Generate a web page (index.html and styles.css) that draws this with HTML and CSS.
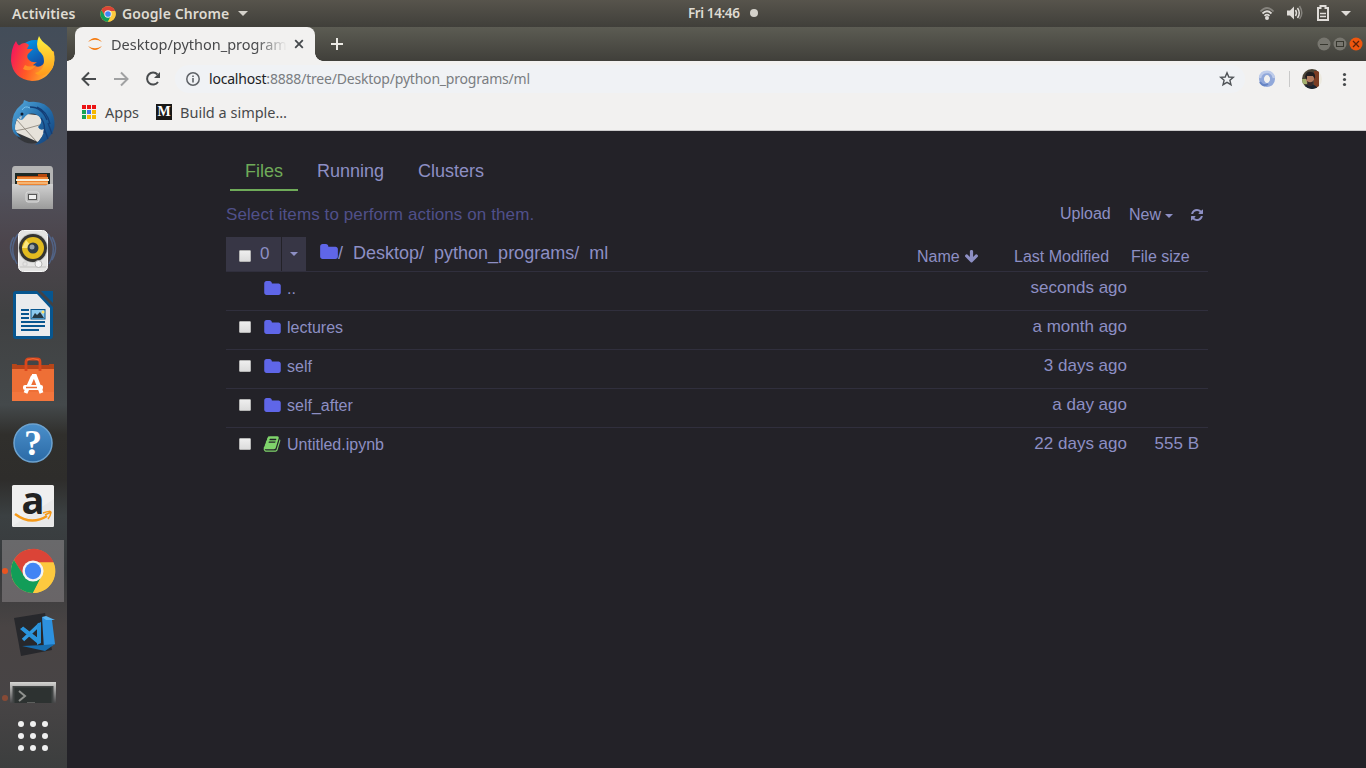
FILE: index.html
```html
<!DOCTYPE html>
<html lang="en">
<head>
<meta charset="utf-8">
<title>Desktop/python_programs/ml</title>
<link rel="stylesheet" href="styles.css">
</head>
<body>
<svg class="defs" width="0" height="0">
  <defs>
    <symbol id="chrome" viewBox="0 0 48 48">
      <circle cx="24" cy="24" r="23" fill="#fdc93f"/>
      <path d="M4.1 12.500A23 23 0 0 1 45.500 15H24L14 29Z" fill="#db4437"/>
      <path d="M4.100 12.500A23 23 0 0 0 24 47L33.500 29H14.500Z" fill="#129d58"/>
      <path d="M24 47A23 23 0 0 0 45.500 15H24L33 29Z" fill="#fdc93f"/>
      <circle cx="24" cy="24" r="11" fill="#f4f4f4"/><circle cx="24" cy="24" r="8.500" fill="#4285f4"/>
    </symbol>
    <symbol id="folder" viewBox="0 0 1664 1408"><path d="M1664 416v704q0 92-66 158t-158 66h-1216q-92 0-158-66t-66-158v-960q0-92 66-158t158-66h320q92 0 158 66t66 158v32h672q92 0 158 66t66 158z" transform="translate(0 64)"/></symbol>
    <symbol id="book" viewBox="0 0 1792 1792"><path d="M1703 478q40 57 18 129l-275 906q-19 64-76.500 107.500t-122.500 43.500h-923q-77 0-148.500-53.500t-99.500-131.500q-24-67-2-127 0-4 3-27t4-37q1-8-3-21.500t-3-19.500q2-11 8-21t16.500-23.500 16.500-23.500q23-38 45-91.500t30-91.500q3-10 .5-30t-.5-28q3-11 17-28t17-23q21-36 42-92t25-90q1-9-2.500-32t.5-28q4-13 22-30.500t22-22.500q19-26 42.500-84.500t27.500-96.500q1-8-3-25.500t-2-26.500q2-8 9-18t18-23 17-21q8-12 16.500-30.500t15-35 16-36 19.500-32 26.500-23.500 36-11.500 47.500 5.500l-1 3q38-9 51-9h761q74 0 114 56t18 130l-274 906q-36 119-71.500 153.500t-128.500 34.500h-869q-27 0-38 15-11 16-1 43 24 70 144 70h923q29 0 56-15.500t35-41.500l300-987q7-22 5-57 38 15 59 43zm-1064 2q-4 13 2 22.500t20 9.500h608q13 0 25.500-9.500t16.500-22.500l21-64q4-13-2-22.500t-20-9.500h-608q-13 0-25.500 9.500t-16.500 22.500zm-83 256q-4 13 2 22.500t20 9.500h608q13 0 25.500-9.500t16.500-22.500l21-64q4-13-2-22.500t-20-9.500h-608q-13 0-25.500 9.500t-16.500 22.500z"/></symbol>
  </defs>
</svg>

<header class="topbar">
  <span class="t-act">Activities</span>
  <svg class="t-chrome" width="16" height="16"><use href="#chrome"/></svg>
  <span class="t-app">Google Chrome</span>
  <i class="tri"></i>
  <div class="clock"><span class="t-clock">Fri 14:46</span><i class="dot"></i></div>
  <svg class="tray" width="96" height="27" viewBox="1258 0 96 27">
    <g fill="none" stroke-width="1.800">
      <path d="M1260.500 11.500Q1267 4.500 1273.500 11.500" stroke="#85837d"/>
      <path d="M1262.500 13.500Q1267 9 1271.500 13.500M1264.500 15.800Q1267 13.500 1269.500 15.800" stroke="#dfdcd8"/>
    </g>
    <circle cx="1267" cy="18" r="2" fill="#dfdcd8"/>
    <path d="M1287 10.500h3l4-4v13l-4-4h-3z" fill="#dfdcd8"/>
    <path d="M1295.500 10q2 3 0 6M1297.500 8q3.500 5 0 10" fill="none" stroke="#dfdcd8" stroke-width="1.500"/>
    <path d="M1299.500 6q4.500 7 0 13" fill="none" stroke="#85837d" stroke-width="1.500"/>
    <path d="M1318 8h2.500V6h5v2h2.500v12h-10z" fill="none" stroke="#dfdcd8" stroke-width="2"/>
    <path d="M1320 13.500h6M1320 16.500h6" stroke="#dfdcd8" stroke-width="1.500"/>
    <path d="M1341 11h10l-5 5z" fill="#dfdcd8"/>
  </svg>
</header>

<div class="desk">
<nav class="dock">
  <div class="apps">
    <div class="app"><svg width="46" height="46" viewBox="0 0 46 46">
      <defs>
        <linearGradient id="fx" x1="0" y1=".3" x2="1" y2=".6"><stop offset="0" stop-color="#f5195a"/><stop offset=".45" stop-color="#ff5a26"/><stop offset="1" stop-color="#ffbd2e"/></linearGradient>
        <linearGradient id="fy" x1="0" y1="0" x2="0" y2="1"><stop offset="0" stop-color="#fff33f"/><stop offset="1" stop-color="#ff9a1c"/></linearGradient>
        <linearGradient id="fb" x1="0" y1="0" x2=".6" y2="1"><stop offset="0" stop-color="#00a4f5"/><stop offset="1" stop-color="#18388f"/></linearGradient>
      </defs>
      <circle cx="25" cy="21" r="17" fill="url(#fb)"/>
      <path d="M6 5Q7 8 9 9.500Q15 5 19 9L17 13H23L18 18Q16 21 19 24Q22 27 27 26L23 29Q31 34 36 24Q42 12 44 16Q45 25 43 31Q36 45 22 45Q3 43 1 25Q1 12 6 5Z" fill="url(#fx)"/>
      <path d="M29 0Q31 5 37 9Q45 15 44.500 24Q44 33 38 37Q31 42 25 37Q34 35 34 25Q34 19 29 15Q25 9 29 0Z" fill="url(#fy)"/>
      <path d="M15 29Q20 32 26 29Q21 37 13 33Z" fill="#ff8d28"/>
    </svg></div>
    <div class="app"><svg width="46" height="46" viewBox="0 0 46 46">
      <defs><linearGradient id="tb" x1="0" y1="0" x2="1" y2="1"><stop offset="0" stop-color="#59aee1"/><stop offset=".5" stop-color="#246fac"/><stop offset="1" stop-color="#123e78"/></linearGradient></defs>
      <path d="M2 20L8 38Q20 48 34 40L38 22L23 11Z" fill="#34363a"/>
      <path d="M9 13L34 16L35 33L28 42L3 31Z" fill="#e6e2da"/>
      <path d="M6 19L15 29L33 24M4 31L15 29L26 41" fill="none" stroke="#99938a"/>
      <path d="M2 25Q2 12 11 5Q14 3 14 0L19 2Q35 0 42 12Q48 27 40 36Q34 44 25 45Q34 37 34 29Q30 31 28 27Q35 20 27 15Q19 11 14 18Q11 22 8 18Q5 21 5 29Q7 34 11 38Q1 34 2 25Z" fill="url(#tb)"/>
      <path d="M20 7Q32 7 37 20M27 7Q37 11 40 24M34 28L38 39M38 23L42 34M31 18Q36 25 34 33" fill="none" stroke="#143e76" stroke-width="1.300"/>
      <path d="M12 10Q15 5 20 8" stroke="#78c1ec" fill="none"/><circle cx="12" cy="14" r="1.500" fill="#101e33"/><path d="M9 17l3-1-1 4z" fill="#b6c2cc"/>
    </svg></div>
    <div class="app"><svg width="46" height="46" viewBox="0 0 46 46">
      <defs><linearGradient id="fc" x1="0" y1="0" x2="0" y2="1"><stop stop-color="#d1d1d1"/><stop offset="1" stop-color="#9b9b9b"/></linearGradient></defs>
      <path d="M2 6Q2 2 5 2H40Q43 2 43 6V45H2Z" fill="#b4b4b4"/><path d="M5 9H40V21H5Z" fill="#1d2925"/>
      <path d="M7 12H28V10H37V20H7Z" fill="#b7480d"/><path d="M7 13H38V21H7Z" fill="#ee8532"/><path d="M6 15H39V17H6Z" fill="#f5edda"/><path d="M7 18H38V20H7Z" fill="#f4b473"/>
      <path d="M2 20H7Q9 20 10 22H36Q37 20 39 20H43V45H2Z" fill="url(#fc)"/>
      <rect x="16" y="28" width="13" height="10" rx="2" fill="#b5b5b5" stroke="#ddd"/><rect x="18.500" y="30.500" width="8" height="5" fill="#eee" stroke="#555"/>
    </svg></div>
    <div class="app"><svg width="50" height="46" viewBox="0 0 50 46">
      <path d="M6 9Q-1 19 6 32M10 6Q0 20 9 36M44 9Q51 20 44 32M40 6Q50 20 41 36" fill="none" stroke="#5473a5" stroke-width="1.500" opacity=".65"/>
      <rect x="10.500" y="2.500" width="29" height="41" rx="5" fill="#e4e4e3" stroke="#f7f7f7"/><path d="M12 39H38" stroke="#c1c1bf"/>
      <circle cx="25" cy="20" r="15" fill="#c7c9c8"/><circle cx="25" cy="20" r="14" fill="#343431"/><circle cx="25" cy="20" r="11" fill="#e2bb20"/><path d="M18 12L25 20L14 20Z" fill="#fbe67c"/><circle cx="25" cy="20" r="5.500" fill="#2f3c46"/><circle cx="24" cy="19" r="2.500" fill="#9aa4aa"/>
      <circle cx="30.500" cy="36" r="3.500" fill="#f6f6f6" stroke="#b5b5b4"/><rect x="15" y="34" width="4" height="4" rx="1" fill="none" stroke="#ccc"/>
    </svg></div>
    <div class="app"><svg width="46" height="48" viewBox="0 0 46 48">
      <path d="M6 0H27L43 16V45Q43 48 40 48H6Q3 48 3 45V3Q3 0 6 0Z" fill="#07568f"/><path d="M6 3H27L40 17V45H6Z" fill="#e9ebed"/>
      <path d="M31 0H43V12Z" fill="#07568f"/><path d="M11 19H19M11 23H19M11 27H19M11 31H35M11 35H35M11 39H29" stroke="#07568f" stroke-width="2"/>
      <rect x="21" y="18.500" width="14" height="9.500" fill="#8ccaf0" stroke="#07568f"/><path d="M22 27L25 22L27 24L30 21L34 27Z" fill="#253945"/><circle cx="33" cy="21" r="1.500" fill="#ffe26a"/>
    </svg></div>
    <div class="app"><svg width="46" height="46" viewBox="0 0 46 46">
      <path d="M5 9H41V14H5Z" fill="#b84319"/><path d="M2 8H7L5 13V45H2ZM39 8H44V45H41Z" fill="#b64619"/>
      <path d="M2 13H44V45H2Z" fill="#ee6f36"/><path d="M2 36H44V45H2Z" fill="#f3763d"/>
      <path d="M16 15V6Q16 3 19 3H27Q30 3 30 6V15" fill="none" stroke="#d9471c" stroke-width="2.800"/><path d="M17 4Q23 1 29 4" fill="none" stroke="#f06a39"/>
      <path d="M23 20L15.500 37M22 20H25L31.500 37" fill="none" stroke="#fff" stroke-width="4"/><rect x="13" y="29" width="20" height="5" rx="2" fill="#fff"/><path d="M16 31.500H27" stroke="#ef6e35" stroke-width="1.500"/>
    </svg></div>
    <div class="app"><svg width="46" height="46" viewBox="0 0 46 46">
      <defs><linearGradient id="hp" x1="0" y1="0" x2="0" y2="1"><stop stop-color="#4a8fca"/><stop offset="1" stop-color="#2b6aa6"/></linearGradient></defs>
      <circle cx="23" cy="23" r="19" fill="url(#hp)" stroke="#6da3d0" stroke-width="1.500"/><text x="23" y="35" class="q">?</text>
    </svg></div>
    <div class="app"><svg width="46" height="46" viewBox="0 0 46 46">
      <rect x="2" y="1" width="42" height="42" rx="1.500" fill="#efefef"/><path d="M2 42.500L44 15V42.500Z" fill="#e2e2e2" opacity=".5"/>
      <text x="23" y="30" class="amz">a</text>
      <path d="M5 30Q21 42 37 32" fill="none" stroke="#f59917" stroke-width="2.500"/><path d="M33 29Q41 26 41 28.500Q40.500 32 38 35M35 31L41 28" fill="none" stroke="#f59917" stroke-width="1.500"/>
    </svg></div>
    <div class="app active"><svg width="46" height="46"><use href="#chrome"/></svg><i class="run"></i></div>
    <div class="app"><svg width="46" height="46" viewBox="0 0 46 46">
      <path d="M4 6L35 1L42 38L11 44Z" fill="#27282c"/>
      <path d="M12 16L30 30M30 12L13 28" stroke="#3098df" stroke-width="3.500"/><path d="M10 17L13 15L31 29L28 32ZM27 12L31 10V31L27 33Z" fill="#2992da"/>
      <path d="M32 5L42 8L45 32L34 37Z" fill="#2d91df"/><path d="M32 5L36 4L45 8L36 8Z" fill="#59b4f2"/><path d="M12 34L34 33L45 32L35 39Z" fill="#176daf"/>
    </svg></div>
    <div class="app term"><svg width="46" height="40" viewBox="0 0 46 40">
      <defs><linearGradient id="tm" x1="0" y1="0" x2="0" y2=".55"><stop stop-color="#d4d4d2"/><stop offset="1" stop-color="#3f3f41"/></linearGradient></defs>
      <rect width="46" height="40" fill="url(#tm)"/><rect x="2.500" y="4" width="41" height="34" fill="#414444"/>
      <rect x="4.500" y="5.500" width="37" height="32" fill="#2d3231"/><path d="M9 9L15 14L9 19" fill="none" stroke="#8f918e" stroke-width="2"/><path d="M17 21H25" stroke="#5c5f5d" stroke-width="2"/>
    </svg><i class="run dim"></i></div>
  </div>
  <svg class="grid" width="32" height="32" viewBox="0 0 32 32"><g fill="#f0f0f0"><circle cx="4" cy="4" r="3"/><circle cx="16" cy="4" r="3"/><circle cx="28" cy="4" r="3"/><circle cx="4" cy="16" r="3"/><circle cx="16" cy="16" r="3"/><circle cx="28" cy="16" r="3"/><circle cx="4" cy="28" r="3"/><circle cx="16" cy="28" r="3"/><circle cx="28" cy="28" r="3"/></g></svg>
</nav>

<main class="window">
  <div class="tabs">
    <div class="tab">
      <svg width="16" height="16" viewBox="0 0 16 16"><path d="M1 6Q8-2 15 6Q8 1.500 1 6ZM1 10Q8 18 15 10Q8 14.500 1 10Z" fill="#f57c12"/></svg>
      <span class="t-tab">Desktop/python_program</span>
      <svg class="close" width="10" height="10" viewBox="0 0 10 10"><path d="M1.200 1.200L8.800 8.800M8.800 1.200L1.200 8.800" stroke="#45494c" stroke-width="1.800"/></svg>
    </div>
    <svg width="12" height="12" viewBox="0 0 12 12"><path d="M6 0V12M0 6H12" stroke="#eceae5" stroke-width="2"/></svg>
    <svg class="wm" width="46" height="16" viewBox="0 0 46 16">
      <circle cx="7" cy="8" r="6.500" fill="#77766f"/><path d="M3 8.500H11" stroke="#37372f"/>
      <circle cx="23" cy="8" r="6.500" fill="#77766f"/><rect x="19.500" y="5.500" width="7" height="5" fill="none" stroke="#37372f"/>
      <circle cx="39" cy="8" r="6.500" fill="#ee560e"/><path d="M36 5L42 11M42 5L36 11" stroke="#5c2209" stroke-width="1.300"/>
    </svg>
  </div>
  <div class="toolbar">
    <svg width="96" height="34" viewBox="0 0 96 34" fill="none" stroke-width="2">
      <path d="M29 18H16M22 11.500L15.500 18L22 24.500" stroke="#484b4d"/>
      <path d="M47 18H60M54 11.500L60.500 18L54 24.500" stroke="#a0a1a2"/>
      <path d="M91 21A6 6 0 1 1 90.500 13.500" stroke="#484b4d"/><path d="M93 11V17H87Z" fill="#484b4d"/>
    </svg>
    <div class="omni">
      <svg width="14" height="14" viewBox="0 0 14 14"><circle cx="7" cy="7" r="6.200" fill="none" stroke="#5f6368" stroke-width="1.500"/><path d="M7 6V10.500M7 3.500V5" stroke="#5f6368" stroke-width="1.600"/></svg>
      <span class="t-url"><b>localhost</b>:8888/tree/Desktop/python_programs/ml</span>
      <svg class="star" width="16" height="16" viewBox="0 0 16 16"><path d="M8 1.800L9.800 6L14.300 6.400L10.900 9.300L12 13.700L8 11.300L4 13.700L5.100 9.300L1.700 6.400L6.200 6Z" fill="none" stroke="#505458" stroke-width="1.400"/></svg>
    </div>
    <svg width="110" height="34" viewBox="1256 61 110 34">
      <defs><clipPath id="av"><circle cx="1312" cy="79" r="10"/></clipPath></defs>
      <circle cx="1267" cy="79" r="5.500" fill="none" stroke="#91a8da" stroke-width="5"/><path d="M1260 78Q1261 71 1269 72Q1273 73 1274 78" fill="none" stroke="#bdcbea" stroke-width="2.500"/><path d="M1260 82Q1263 87 1268 84" fill="none" stroke="#6684c4" stroke-width="2"/><ellipse cx="1267" cy="79" rx="2.500" ry="4" fill="#f2f1f0"/>
      <path d="M1289.500 71V87" stroke="#c9c9c9"/>
      <g clip-path="url(#av)"><path d="M1302 69H1322V89H1302Z" fill="#ece9df"/><path d="M1302 69H1317V89H1302Z" fill="#4b4437"/><path d="M1314 71H1319V88H1314Z" fill="#7b3d24"/><path d="M1302 79H1307V84H1302Z" fill="#a2b06d"/><ellipse cx="1310" cy="79" rx="4" ry="5.500" fill="#b27c60"/><path d="M1305 77Q1306 71 1311 72Q1316 72 1315 79L1313 76H1307V80Z" fill="#211e20"/><path d="M1303 89Q1305 84 1309 85Q1315 83 1318 89Z" fill="#1b2430"/><path d="M1307 81Q1311 84 1314 80L1312 86H1308Z" fill="#37292a"/></g>
      <g fill="#484b4d"><circle cx="1344.500" cy="74.500" r="1.600"/><circle cx="1344.500" cy="79.500" r="1.600"/><circle cx="1344.500" cy="84.500" r="1.600"/></g>
    </svg>
  </div>
  <div class="bookmarks">
    <svg width="14" height="14" viewBox="0 0 14 14"><path d="M0 0h4v4H0zM5 0h4v4H5zM10 0h4v4h-4z" fill="#ec1414"/><path d="M0 5h4v4H0zM0 10h4v4H0z" fill="#16a454"/><path d="M5 5h4v4H5z" fill="#3d74ed"/><path d="M10 5h4v4h-4zM5 10h4v4H5zM10 10h4v4h-4z" fill="#f5b800"/></svg>
    <span class="t-apps">Apps</span>
    <i class="medium">M</i>
    <span class="t-build">Build a simple…</span>
  </div>

  <div class="page">
    <div class="nav"><span class="on">Files</span><span>Running</span><span>Clusters</span></div>
    <div class="actions">
      <span class="hint">Select items to perform actions on them.</span>
      <span class="up">Upload</span><span class="new">New</span><i class="caret"></i>
      <svg class="refresh" width="14" height="14" viewBox="0 0 1792 1792" fill="#8d8fc4"><path d="M1639 1056q0 5-1 7-64 268-268 434.500t-478 166.500q-146 0-282.500-55t-243.500-157l-129 129q-19 19-45 19t-45-19-19-45v-448q0-26 19-45t45-19h448q26 0 45 19t19 45-19 45l-137 137q71 66 161 102t187 36q134 0 250-65t186-179q11-17 53-117 8-23 30-23h192q13 0 22.500 9.500t9.500 22.500zm25-800v448q0 26-19 45t-45 19h-448q-26 0-45-19t-19-45 19-45l138-138q-148-137-349-137-134 0-250 65t-186 179q-11 17-53 117-8 23-30 23h-199q-13 0-22.500-9.500t-9.500-22.500v-7q65-268 270-434.500t480-166.500q146 0 284 55.500t245 156.500l130-129q19-19 45-19t45 19 19 45z"/></svg>
    </div>
    <div class="list">
      <div class="head">
        <div class="sel"><i class="cb"></i><span>0</span></div><div class="drop"><i class="caret"></i></div>
        <div class="crumbs"><svg class="fold" width="18" height="15"><use href="#folder"/></svg><span>/</span><span>Desktop/</span><span>python_programs/</span><span>ml</span></div>
        <div class="cols"><span class="c1">Name <svg width="15" height="15" viewBox="0 0 1792 1792" fill="#8d8fc4"><path d="M1675 832q0 53-37 90l-651 652q-39 37-91 37-53 0-90-37l-651-652q-38-36-38-90 0-53 38-91l74-75q39-37 91-37 53 0 90 37l294 294v-704q0-52 38-90t90-38h128q52 0 90 38t38 90v704l294-294q37-37 90-37 52 0 91 37l75 75q37 39 37 91z"/></svg></span><span class="c2">Last Modified</span><span class="c3">File size</span></div>
      </div>
      <div class="row"><i class="cb none"></i><svg class="fold" width="17" height="14"><use href="#folder"/></svg><span class="name">..</span><span class="when">seconds ago</span><span class="size"></span></div>
      <div class="row"><i class="cb"></i><svg class="fold" width="17" height="14"><use href="#folder"/></svg><span class="name">lectures</span><span class="when">a month ago</span><span class="size"></span></div>
      <div class="row"><i class="cb"></i><svg class="fold" width="17" height="14"><use href="#folder"/></svg><span class="name">self</span><span class="when">3 days ago</span><span class="size"></span></div>
      <div class="row"><i class="cb"></i><svg class="fold" width="17" height="14"><use href="#folder"/></svg><span class="name">self_after</span><span class="when">a day ago</span><span class="size"></span></div>
      <div class="row"><i class="cb"></i><svg class="bk" width="18" height="18"><use href="#book"/></svg><span class="name">Untitled.ipynb</span><span class="when">22 days ago</span><span class="size">555 B</span></div>
    </div>
  </div>
</main>
</div>
</body>
</html>
```
FILE: styles.css
```css
* { box-sizing: border-box; }
body { margin: 0; width: 1366px; height: 768px; overflow: hidden; background: #232228; font-family: "Noto Sans", sans-serif; }
svg { display: block; flex: none; overflow: visible; }
.defs { position: absolute; }
span { white-space: nowrap; }
i { font-style: normal; display: block; flex: none; }

.topbar { height: 27px; display: flex; align-items: center; background: linear-gradient(#57544c, #403f3a); color: #dfdbd2; font-weight: 600; font-size: 14px; line-height: 26px; padding-left: 12px; position: relative; }
.t-act { width: 88px; letter-spacing: .1px; }
.t-app { margin-left: 6px; width: 112px; letter-spacing: .1px; }
.tri { margin-left: 4px; border: 5px solid transparent; border-top-color: #d5d2cb; border-bottom: 0; }
.clock { position: absolute; left: 688px; top: 0; height: 26px; display: flex; align-items: center; gap: 4px; }
.t-clock { width: 58px; font-size: 13.500px; letter-spacing: -.4px; }
.dot { width: 8px; height: 8px; border-radius: 50%; background: #d5d2cb; }
.tray { margin-left: auto; margin-right: 12px; }

.desk { display: flex; height: 741px; }
.dock { width: 67px; display: flex; flex-direction: column; align-items: center; background: linear-gradient(#434d59 0, #50505a 22%, #4c454c 29%, #404142 39%, #44494b 51%, #302f2c 55%, #2e2d2b 61%, #3b4042 66%, #373a3c 73%, #494444 81%, #474445 91%, #3c3e3e 100%); }
.apps { width: 67px; height: 676px; overflow: hidden; display: flex; flex-direction: column; }
.app { flex: none; height: 64px; width: 66px; display: flex; align-items: center; justify-content: center; position: relative; }
.app.active { background: linear-gradient(#69696b, #696567); background-size: 62px 62px; background-position: 2px 1px; background-repeat: no-repeat; border-radius: 4px; }
.run { position: absolute; left: 2px; top: 29px; width: 6px; height: 6px; border-radius: 50%; background: #e95420; }
.dim { opacity: .4; top: 28px; }
.term { align-items: flex-start; padding-top: 15px; }
.grid { margin-top: 17px; margin-right: 1px; }
.q { font: 700 36px "Liberation Serif", serif; fill: #fff; text-anchor: middle; }
.amz { font: 700 38px "Open Sans", sans-serif; fill: #222; text-anchor: middle; }

.window { flex: 1; display: flex; flex-direction: column; min-width: 0; }
.tabs { height: 34px; display: flex; align-items: center; background: linear-gradient(#5c5c53, #403f3a); padding: 0 3px 0 8px; }
.tab { width: 240px; height: 34px; margin-right: 16px; border-radius: 8px 8px 0 0; background: #f2f1f0; display: flex; align-items: center; padding-left: 12px; position: relative; }
.tab::before, .tab::after { content: ""; position: absolute; bottom: 0; width: 8px; height: 8px; }
.tab::before { left: -8px; background: radial-gradient(circle at 0 0, transparent 7.500px, #f2f1f0 8px); }
.tab::after { right: -8px; background: radial-gradient(circle at 100% 0, transparent 7.500px, #f2f1f0 8px); }
.t-tab { margin-left: 8px; width: 176px; overflow: hidden; font-size: 14.500px; line-height: 32px; color: #48494b; -webkit-mask-image: linear-gradient(90deg, #000 82%, transparent); mask-image: linear-gradient(90deg, #000 82%, transparent); }
.close { margin-left: 7px; }
.wm { margin-left: auto; }
.toolbar { height: 35px; background: #f2f1f0; display: flex; }
.omni { flex: 1; height: 28px; margin: 4px 11px 0 12px; border-radius: 14px; background: #f0f2f5; display: flex; align-items: center; padding: 0 10px 0 11px; }
.t-url { margin-left: 9px; font-size: 14px; line-height: 26px; color: #7a7d81; letter-spacing: -.2px; }
.t-url b { font-weight: 400; color: #202124; }
.star { margin-left: auto; }
.bookmarks { height: 35px; background: #f2f1f0; border-bottom: 1px solid #cbcacb; display: flex; align-items: center; padding: 0 0 3px 15px; font-size: 14.500px; color: #48494b; }
.t-apps { margin-left: 9px; width: 51px; }
.medium { width: 16px; height: 16px; background: #191817; color: #fff; font: 700 14px/16px "Liberation Serif", serif; text-align: center; }
.t-build { margin-left: 8px; }

.page { flex: 1; background: #232228; padding: 22px 158px 0 159px; font-family: "Liberation Sans", Arial, sans-serif; color: #8d8fc4; }
.nav { display: flex; gap: 4px; font-size: 18px; padding-left: 4px; }
.nav span { height: 38px; line-height: 36px; padding: 0 15px; border-bottom: 2px solid transparent; }
.nav .on { color: #6fab59; border-color: #6fab59; }
.actions { height: 46px; display: flex; line-height: 48px; font-size: 16px; }
.hint { width: 834px; font-size: 17px; color: #50508a; letter-spacing: .1px; }
.up { width: 69px; line-height: 46px; }
.new { width: 36px; }
.caret { border: 4px solid transparent; border-top-color: #8d8fc4; border-bottom: 0; }
.actions .caret { margin-top: 23px; width: 8px; height: 4px; }
.refresh { margin: 17px 0 0 17px; }
.list { width: 982px; }
.head { height: 35px; display: flex; border-bottom: 1px solid #302f3d; }
.sel { width: 55px; height: 34px; background: #373645; margin-right: 1px; display: flex; font-size: 17px; line-height: 33px; }
.drop { width: 24px; height: 34px; background: #373645; display: flex; align-items: center; justify-content: center; }
.cb { width: 12px; height: 12px; margin-left: 13px; background: linear-gradient(#eeeeee, #dcdcdc); border: 1px solid #b4b4b4; border-radius: 1px; }
.sel .cb { margin-top: 13px; margin-right: 9px; }
.fold { fill: #5f66e8; }
.crumbs { display: flex; font-size: 18px; line-height: 32px; margin-left: 14px; flex: 1; }
.crumbs .fold { margin-top: 7px; }
.crumbs span { margin-right: 10px; }
.cols { display: flex; font-size: 16px; line-height: 40px; width: 291px; }
.cols svg { display: inline-block; vertical-align: -2px; }
.c1 { width: 97px; }
.c2 { width: 117px; }
.row { height: 39px; display: flex; border-bottom: 1px solid #302f3d; font-size: 16px; }
.row:last-child { border: 0; }
.row .cb { margin-top: 10px; }
.row .none { visibility: hidden; }
.row .fold { margin: 9px 0 0 13px; }
.bk { fill: #7fd46b; margin: 7px 0 0 12px; }
.name { margin-left: 6px; line-height: 34px; flex: 1; }
.when { font-size: 17px; line-height: 32px; }
.size { font-size: 17px; line-height: 32px; width: 81px; padding-right: 9px; text-align: right; }
```
